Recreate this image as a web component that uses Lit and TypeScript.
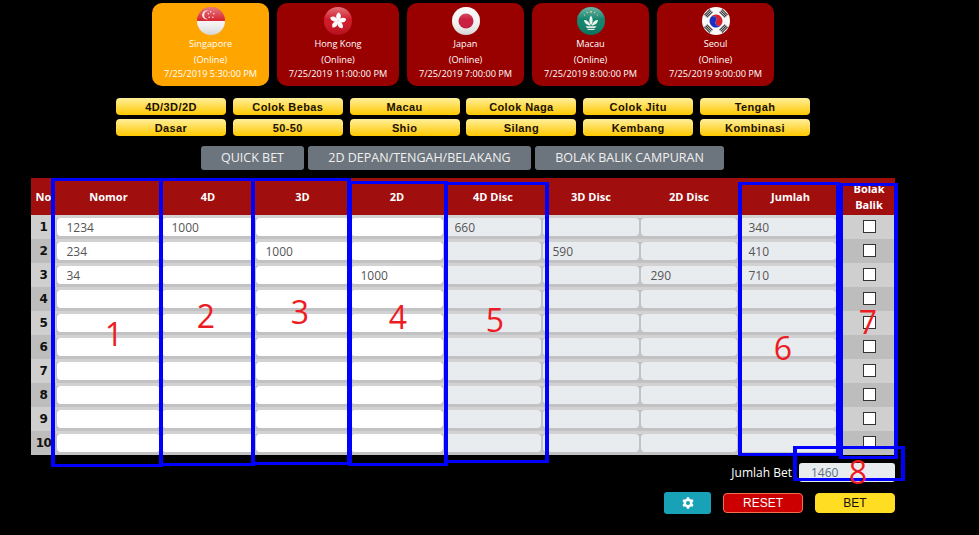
import { LitElement, html, css, svg } from "lit";
import { customElement } from "lit/decorators.js";

const gloss = (id: string) => svg`
  <defs>
    <linearGradient id="${id}" x1="0" y1="0" x2="0" y2="1">
      <stop offset="0" stop-color="#fff" stop-opacity=".42"/>
      <stop offset=".45" stop-color="#fff" stop-opacity=".04"/>
      <stop offset="1" stop-color="#000" stop-opacity=".14"/>
    </linearGradient>
    <clipPath id="${id}c"><circle cx="14" cy="14" r="14"/></clipPath>
  </defs>`;
const shine = (id: string) => svg`<circle cx="14" cy="14" r="14" fill="url(#${id})"/>`;

const FLAGS: Record<string, unknown> = {
  sg: html`<svg viewBox="0 0 28 28" class="flag">${gloss("gs")}
    <g clip-path="url(#gsc)">
      <rect width="28" height="14" fill="#d5202c"/><rect y="14" width="28" height="14" fill="#f6f6f6"/>
      <circle cx="9.500" cy="8" r="4.400" fill="#fbe6e6"/><circle cx="11.200" cy="8" r="4" fill="#d5202c"/>
      <g fill="#fbe3e3"><circle cx="13.600" cy="4.800" r=".8"/><circle cx="16.800" cy="6.800" r=".8"/><circle cx="15.800" cy="10.200" r=".8"/><circle cx="12.200" cy="10.200" r=".8"/><circle cx="11.400" cy="6.800" r=".8"/></g>
    </g>${shine("gs")}</svg>`,
  hk: html`<svg viewBox="0 0 28 28" class="flag">${gloss("gh")}
    <circle cx="14" cy="14" r="14" fill="#cf1020"/>
    <g fill="#fff">
      ${[0, 72, 144, 216, 288].map(
        (r) => svg`<path d="M14 14C10.800 11.800 10.300 8 12.800 5.600C16.500 6.800 16.900 10.800 14 14Z" transform="rotate(${r + 12} 14 14)"/>`
      )}
    </g>${shine("gh")}</svg>`,
  jp: html`<svg viewBox="0 0 28 28" class="flag">${gloss("gj")}
    <circle cx="14" cy="14" r="14" fill="#f5f5f5"/>
    <circle cx="14" cy="14" r="7.500" fill="#c9163a"/>${shine("gj")}</svg>`,
  mo: html`<svg viewBox="0 0 28 28" class="flag">${gloss("gm")}
    <circle cx="14" cy="14" r="14" fill="#0b8068"/>
    <g fill="#f2f7f2">
      <path d="M14 8.500C11.800 11.500 11.800 15 14 18.500C16.200 15 16.200 11.500 14 8.500Z"/>
      <path d="M13.500 18.500C10 18.500 7.500 16.200 7 13C10 13 12.500 15 13.500 18.500Z"/>
      <path d="M14.500 18.500C18 18.500 20.500 16.200 21 13C18 13 15.500 15 14.500 18.500Z"/>
      <path d="M8.500 19.300H19.500L18 21H10Z"/><rect x="10.500" y="21.800" width="7" height="1.200"/>
    </g>
    <g fill="#e6d77a"><circle cx="14" cy="4.800" r=".9"/><circle cx="10.300" cy="5.600" r=".7"/><circle cx="17.700" cy="5.600" r=".7"/><circle cx="7.600" cy="8" r=".6"/><circle cx="20.400" cy="8" r=".6"/></g>
    ${shine("gm")}</svg>`,
  kr: html`<svg viewBox="0 0 28 28" class="flag">
    <circle cx="14" cy="14" r="14" fill="#f8f8f8"/>
    <g transform="rotate(30 14 14)">
      <path d="M7.500 14a6.500 6.500 0 0 1 13 0a3.250 3.250 0 0 1-6.500 0a3.250 3.250 0 0 0-6.500 0Z" fill="#d8202f"/>
      <path d="M7.500 14a6.500 6.500 0 0 0 13 0a3.250 3.250 0 0 1-6.500 0a3.250 3.250 0 0 0-6.500 0Z" fill="#1b2fc4"/>
    </g>
    <g stroke="#333" stroke-width="1.100">
      ${[45, 135, 225, 315].map(
        (r) => svg`<g transform="rotate(${r} 14 14)"><path d="M10 1.600H18M10 3.300H18M10 5H18"/></g>`
      )}
    </g></svg>`,
};

const MARKETS = [
  { flag: "sg", name: "Singapore", time: "7/25/2019 5:30:00 PM", active: true },
  { flag: "hk", name: "Hong Kong", time: "7/25/2019 11:00:00 PM" },
  { flag: "jp", name: "Japan", time: "7/25/2019 7:00:00 PM" },
  { flag: "mo", name: "Macau", time: "7/25/2019 8:00:00 PM" },
  { flag: "kr", name: "Seoul", time: "7/25/2019 9:00:00 PM" },
];

const GAMES = [
  "4D/3D/2D", "Colok Bebas", "Macau", "Colok Naga", "Colok Jitu", "Tengah",
  "Dasar", "50-50", "Shio", "Silang", "Kembang", "Kombinasi",
];

const TABS = ["QUICK BET", "2D DEPAN/TENGAH/BELAKANG", "BOLAK BALIK CAMPURAN"];
const COLS = ["Nomor", "4D", "3D", "2D", "4D Disc", "3D Disc", "2D Disc", "Jumlah"];

// values by row: [nomor, 4d, 3d, 2d, 4d disc, 3d disc, 2d disc, jumlah]
const ROWS: string[][] = [
  ["1234", "1000", "", "", "660", "", "", "340"],
  ["234", "", "1000", "", "", "590", "", "410"],
  ["34", "", "", "1000", "", "", "290", "710"],
  ...Array.from({ length: 7 }, () => ["", "", "", "", "", "", "", ""]),
];

// annotation boxes: x, y, w, h of outer edge
const BOXES = [
  [51, 178, 112, 289],
  [159, 178, 96, 288],
  [251, 178, 100, 287],
  [348, 181, 100, 285],
  [444, 182, 105, 281],
  [738, 182, 102, 274],
  [839, 183, 59, 276],
  [793, 446, 112, 35],
];
const MARKS = [
  ["1", 114, 334], ["2", 206, 316], ["3", 300, 312], ["4", 398, 317],
  ["5", 495, 320], ["6", 783, 348], ["7", 868, 322], ["8", 858, 472],
];

@customElement("app-root")
export class AppRoot extends LitElement {
  static styles = css`
    :host {
      display: block;
      position: relative;
      width: 979px;
      height: 535px;
      overflow: hidden;
      background: #000;
      color: #fff;
      font-family: "Open Sans", "Noto Sans", sans-serif;
    }
    .markets {
      display: grid;
      grid-template-columns: 117px 122px 117px 117px 117px;
      gap: 8px;
      padding: 3px 0 0 152px;
    }
    .market {
      height: 83px;
      border-radius: 10px;
      background: #990000;
      display: flex;
      flex-direction: column;
      align-items: center;
      font-size: 9.2px;
      line-height: 14px;
      padding-top: 4px;
      box-sizing: border-box;
    }
    .market.active { background: #ffa500; }
    .flag { width: 28px; height: 28px; display: block; }
    .market .name { margin-top: 2px; }
    .market .status { margin-top: 2px; }
    .market .time { margin-top: 0; }
    .games {
      display: grid;
      grid-template-columns: repeat(6, 110px);
      column-gap: 6.8px;
      row-gap: 4px;
      padding: 12px 0 0 116px;
    }
    .game {
      height: 17px;
      border-radius: 4px;
      background: linear-gradient(#ffef9a, #ffc800);
      color: #1a1000;
      font: bold 11px/18px "Liberation Sans", Arial, sans-serif;
      letter-spacing: 0.4px;
      text-align: center;
    }
    .tabs {
      display: flex;
      gap: 4px;
      padding: 10px 0 0 201px;
    }
    .tab {
      height: 24px;
      border-radius: 3px;
      background: #6c757d;
      color: #f0f0f0;
      font-size: 12.5px;
      line-height: 24px;
      text-align: center;
    }
    .tab:nth-child(1) { width: 103px; }
    .tab:nth-child(2) { width: 223px; }
    .tab:nth-child(3) { width: 189px; }
    table {
      margin: 8px 0 0 31px;
      width: 864px;
      table-layout: fixed;
      border-collapse: collapse;
    }
    .c-no { width: 25px; }
    .c-nomor { width: 105px; }
    .c-a { width: 94px; }
    .c-b { width: 95px; }
    .c-d { width: 98px; }
    .c-j { width: 105px; }
    .c-x { width: 52px; }
    th {
      height: 37px;
      padding: 1px 0 0;
      box-sizing: border-box;
      background: #a00e0e;
      color: #fff;
      font: bold 11px/16px "Open Sans", sans-serif;
      text-align: center;
      overflow: hidden;
    }
    td {
      height: 24px;
      padding: 0;
      background: #cfcfcf;
      text-align: center;
    }
    tr:nth-child(even) td { background: #bdbdbd; }
    td.field, tr:nth-child(even) td.field {
      background: linear-gradient(#d2d2d2 0 3px, #c2c2c4 3px);
    }
    td.num {
      box-sizing: border-box;
      padding-top: 1px;
      color: #111;
      font: bold 12px/23px "DejaVu Sans", Verdana, sans-serif;
      letter-spacing: -0.5px;
    }
    .inp {
      display: block;
      height: 18px;
      margin: 3px 1px;
      padding-left: 9.500px;
      box-sizing: border-box;
      border-radius: 4px;
      background: #fff;
      color: #555;
      font-size: 12px;
      line-height: 19px;
      text-align: left;
    }
    .inp.ro { background: #e9ecef; }
    .inp.sum { width: 97px; }
    .box {
      display: block;
      width: 11px;
      height: 11px;
      margin: -1px auto 1px;
      background: #fff;
      border: 1px solid #333;
    }
    .summary {
      display: flex;
      justify-content: flex-end;
      align-items: center;
      gap: 7px;
      padding: 8px 84px 0 0;
      font-size: 12px;
    }
    .summary .total {
      width: 96px;
      height: 19px;
      box-sizing: border-box;
      padding-left: 12px;
      border-radius: 3px;
      background: #e9ecef;
      color: #5a7080;
      line-height: 19px;
    }
    .actions {
      display: flex;
      justify-content: flex-end;
      align-items: center;
      gap: 12px;
      padding: 10px 84px 0 0;
    }
    .gear {
      width: 47px;
      height: 22px;
      border-radius: 3px;
      background: #17a2b8;
      display: flex;
      align-items: center;
      justify-content: center;
    }
    .gear svg { width: 12px; height: 12px; }
    .btn {
      width: 80px;
      height: 20px;
      box-sizing: border-box;
      border-radius: 4px;
      font: 12px/18px "Liberation Sans", Arial, sans-serif;
      text-align: center;
    }
    .reset { background: #cc0000; border: 1px solid #f07050; color: #fff; }
    .bet { background: #ffdd22; border: 1px solid #ffdd22; color: #111; }
    .rect {
      position: absolute;
      box-sizing: border-box;
      border-style: solid;
      border-color: #0000ff;
      border-width: 3px 4px;
      pointer-events: none;
    }
    .mark {
      position: absolute;
      transform: translate(-50%, -50%);
      color: #ed1c24;
      font: 32px/32px "Open Sans", sans-serif;
      pointer-events: none;
    }
  `;

  render() {
    return html`
      <div class="markets">
        ${MARKETS.map(
          (m) => html`<div class="market ${m.active ? "active" : ""}">
            ${FLAGS[m.flag]}
            <div class="name">${m.name}</div>
            <div class="status">(Online)</div>
            <div class="time">${m.time}</div>
          </div>`
        )}
      </div>
      <div class="games">${GAMES.map((g) => html`<div class="game">${g}</div>`)}</div>
      <div class="tabs">${TABS.map((t) => html`<div class="tab">${t}</div>`)}</div>
      <table>
        <colgroup>
          <col class="c-no" /><col class="c-nomor" /><col class="c-a" /><col class="c-b" /><col class="c-a" />
          <col class="c-d" /><col class="c-d" /><col class="c-d" /><col class="c-j" /><col class="c-x" />
        </colgroup>
        <thead>
          <tr>
            <th>No</th>
            ${COLS.map((c) => html`<th>${c}</th>`)}
            <th>Bolak<br />Balik</th>
          </tr>
        </thead>
        <tbody>
          ${ROWS.map(
            (r, i) => html`<tr>
              <td class="num">${i + 1}</td>
              ${r.map(
                (v, j) =>
                  html`<td class="field"><div class="inp ${j >= 4 ? "ro" : ""} ${j === 7 ? "sum" : ""}">${v}</div></td>`
              )}
              <td><span class="box"></span></td>
            </tr>`
          )}
        </tbody>
      </table>
      <div class="summary"><span>Jumlah Bet</span><div class="total">1460</div></div>
      <div class="actions">
        <div class="gear">
          <svg viewBox="0 0 24 24">
            <circle cx="12" cy="12" r="6.500" fill="none" stroke="#fff" stroke-width="5"/>
            <g fill="#fff">
              ${[0, 60, 120, 180, 240, 300].map(
                (r) => svg`<rect x="9.500" y="0.500" width="5" height="6" rx="1" transform="rotate(${r} 12 12)"/>`
              )}
            </g>
          </svg>
        </div>
        <div class="btn reset">RESET</div>
        <div class="btn bet">BET</div>
      </div>
      ${BOXES.map(
        ([x, y, w, h]) =>
          html`<div class="rect" style="left:${x}px;top:${y}px;width:${w}px;height:${h}px"></div>`
      )}
      ${MARKS.map(
        ([t, x, y]) => html`<div class="mark" style="left:${x}px;top:${y}px">${t}</div>`
      )}
    `;
  }
}
